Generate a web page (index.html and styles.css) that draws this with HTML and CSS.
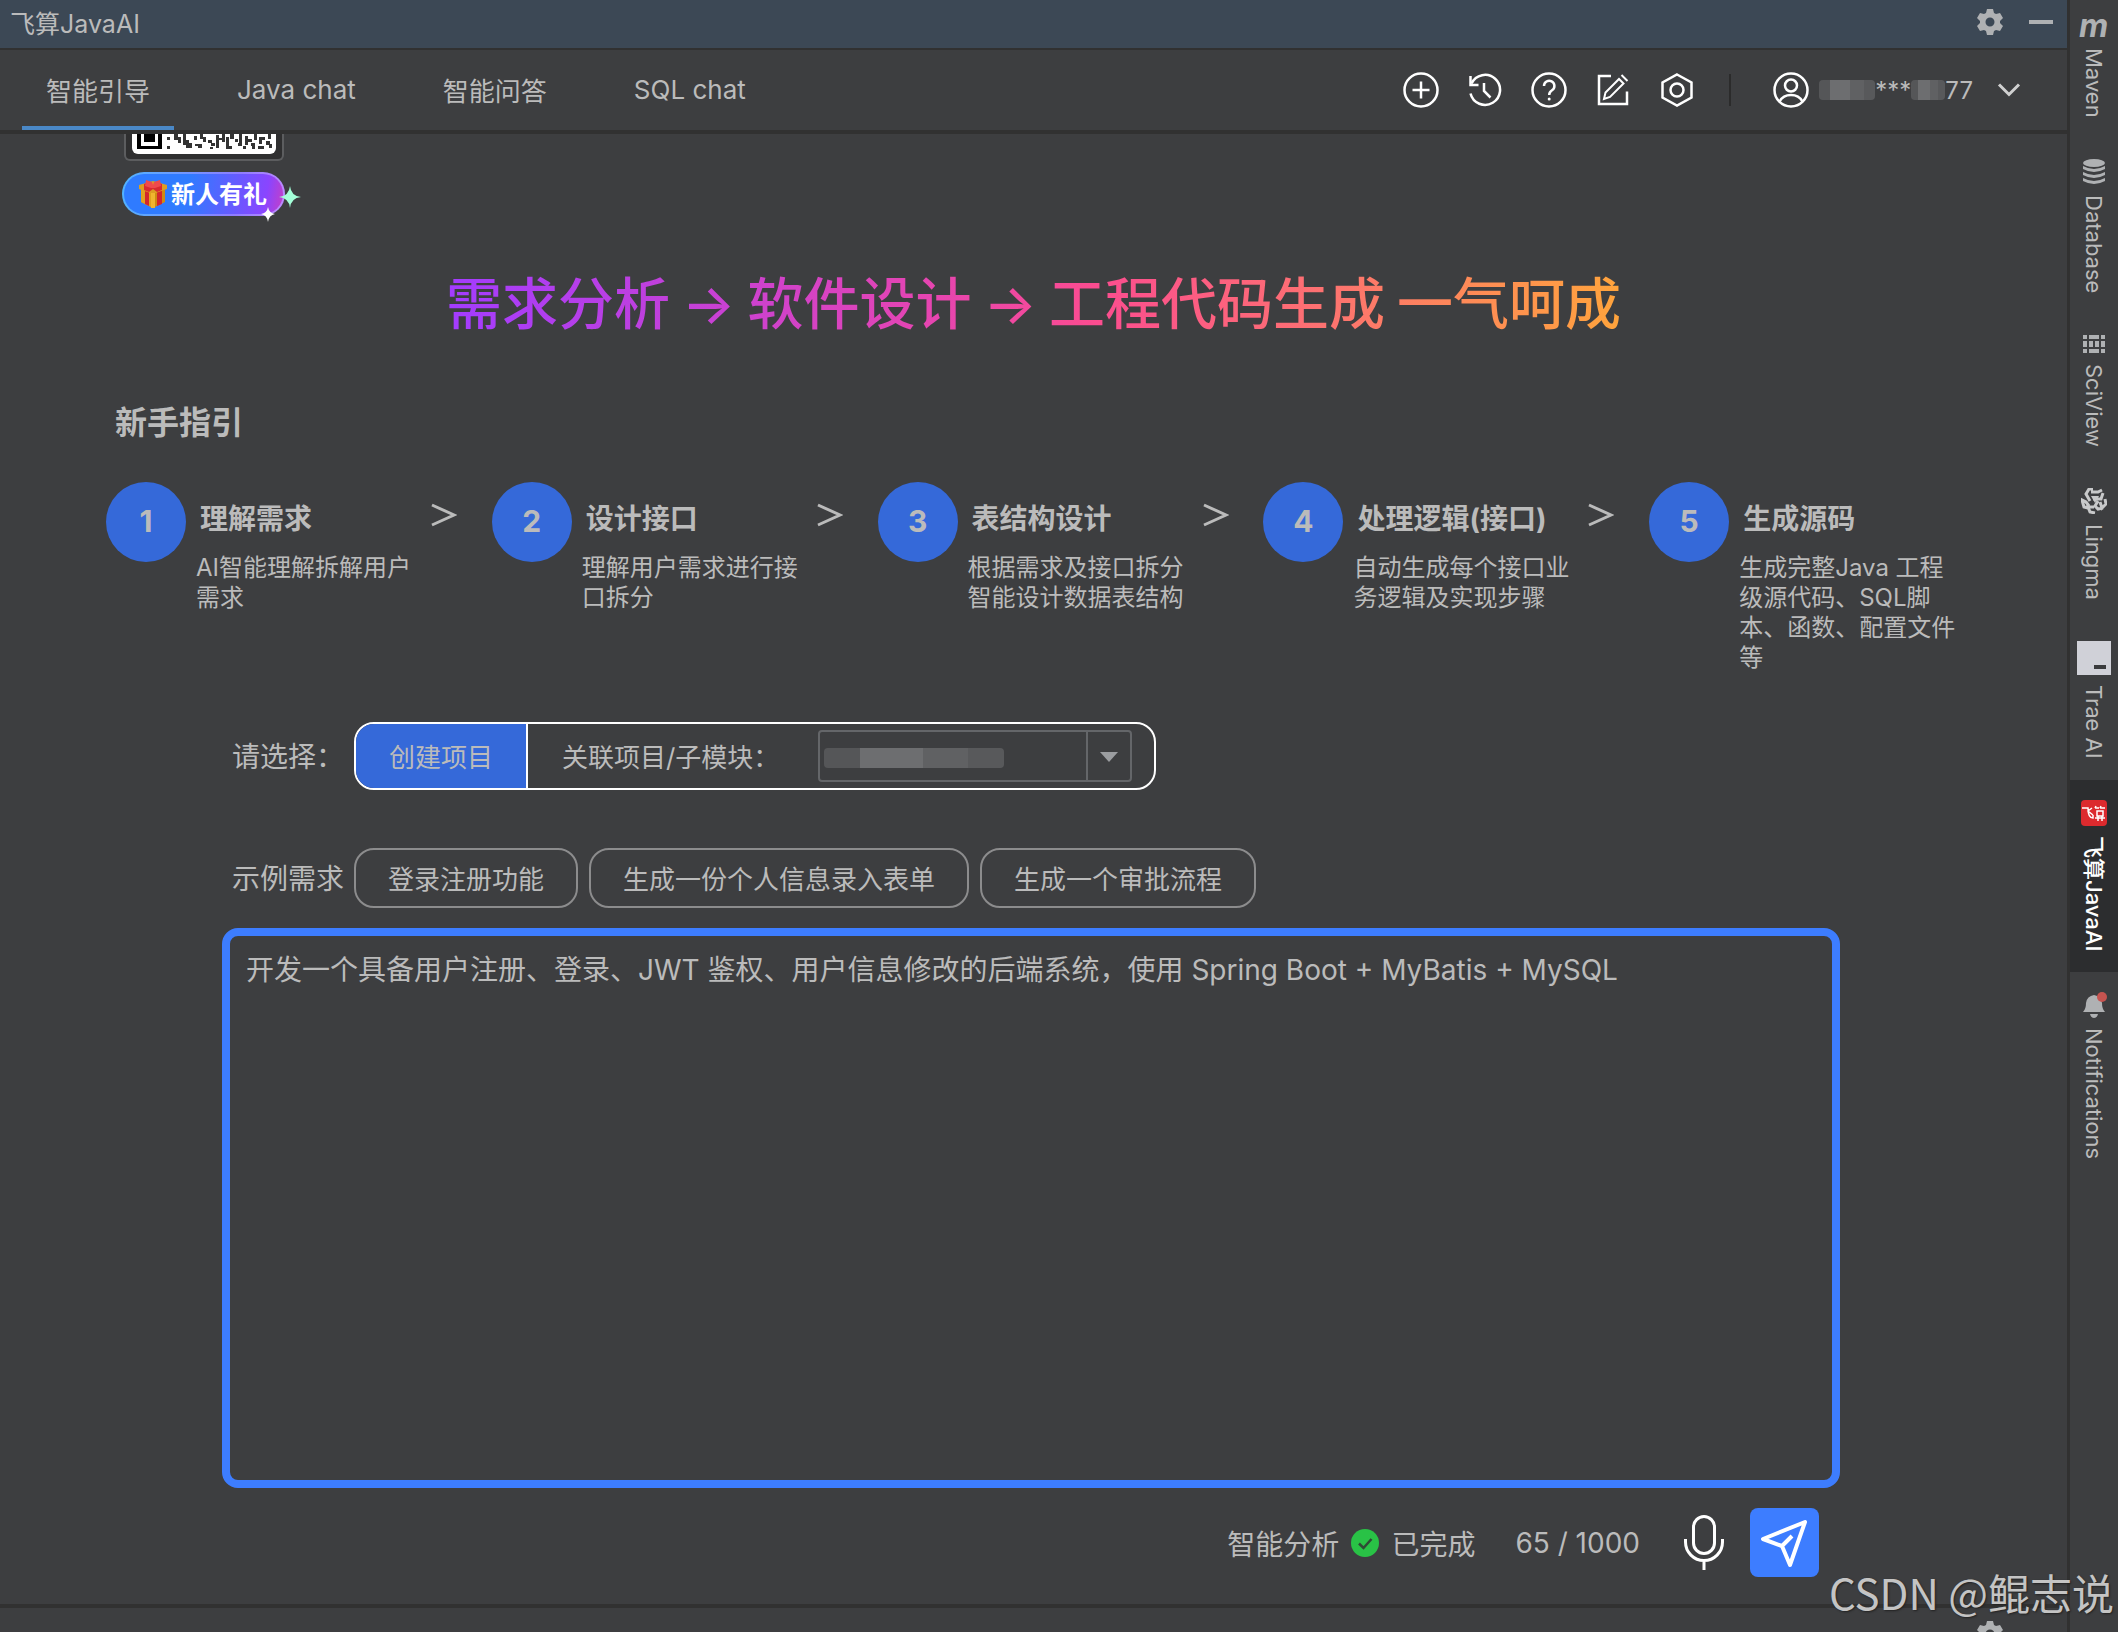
FILE: index.html
```html
<!DOCTYPE html>
<html lang="zh-CN">

<head>
    <meta charset="UTF-8">
    <meta name="viewport" content="width=device-width, initial-scale=1.0">
    <title>飞算JavaAI</title>
    <link rel="stylesheet" href="styles.css">
</head>

<body>
    <div class="window">
        <header class="title-bar">
            <span>飞算JavaAI</span>
            <div class="title-actions">
                <button class="icon-btn" aria-label="设置">
                    <svg width="26" height="26" viewBox="0 0 26 26">
                        <use href="#gear" />
                    </svg>
                </button>
                <button class="icon-btn" aria-label="最小化">
                    <svg width="24" height="26" viewBox="0 0 24 26">
                        <path d="M0 11h24v4H0z" fill="#afb1b3" />
                    </svg>
                </button>
            </div>
        </header>

        <!-- Tabs + toolbar -->
        <nav class="tab-bar">
            <div class="tabs">
                <a href="#" class="tab active">智能引导</a>
                <a href="#" class="tab">Java chat</a>
                <a href="#" class="tab">智能问答</a>
                <a href="#" class="tab">SQL chat</a>
            </div>
            <div class="tools">
                <button class="icon-btn" aria-label="新建">
                    <svg class="line-icon" viewBox="0 0 36 36">
                        <circle cx="18" cy="18" r="16.5" />
                        <path d="M18 9.500v17M9.500 18h17" />
                    </svg>
                </button>
                <button class="icon-btn" aria-label="历史">
                    <svg class="line-icon" viewBox="0 0 36 36">
                        <path d="M4.500 11.500A15 15 0 1 1 3.500 21.500" />
                        <path d="M3.500 4v9h8M17 11v8l6.500 6.500" />
                    </svg>
                </button>
                <button class="icon-btn" aria-label="帮助">
                    <svg class="line-icon" viewBox="0 0 36 36">
                        <circle cx="18" cy="18" r="16.500" />
                        <path d="M13 14a5.200 5.200 0 1 1 8 4.300c-2 1.300-2.800 2-2.800 4.700" />
                        <circle cx="18.200" cy="27" r="1.500" fill="#fff" stroke="none" />
                    </svg>
                </button>
                <button class="icon-btn" aria-label="编辑">
                    <svg class="line-icon" viewBox="0 0 36 36">
                        <path d="M16 4H4v28h28V19.500" />
                        <path d="M9 27l1.500-6.500L24 7l4.500 4.500L15 25zM26.500 3l6 6" stroke-width="2" />
                    </svg>
                </button>
                <button class="icon-btn" aria-label="配置">
                    <svg class="line-icon" viewBox="0 0 36 36">
                        <path d="M18 2.500l14.500 8v15L18 33.500l-14.500-8v-15z" />
                        <circle cx="18" cy="18" r="6.500" />
                    </svg>
                </button>
            </div>
            <span class="divider"></span>
            <button class="user">
                <svg class="line-icon" viewBox="0 0 36 36">
                    <circle cx="18" cy="18" r="16.500" />
                    <circle cx="18" cy="13.500" r="6" />
                    <path d="M6.500 29.500c3-5.500 7-6.500 11.500-6.500s8.500 1 11.500 6.500" />
                </svg>
                <span class="user-name"><i class="mask"></i>***<i class="mask short"></i>77</span>
                <svg width="24" height="16" viewBox="0 0 24 16">
                    <path d="M2 2.500l10 10 10-10" fill="none" stroke="#d0d0d0" stroke-width="3" />
                </svg>
            </button>
        </nav>

        <main class="content">
            <div class="promo">
                <div class="qr-card">
                    <svg width="144" height="20" viewBox="0 0 144 20">
                        <path d="M0 0h144v14a6 6 0 0 1-6 6H6a6 6 0 0 1-6-6z" fill="#fff" />
                        <path d="M5 0h4v12h17V0h4v15H5zM12 0h11v8H12z" />
                        <path d="M35 3h3v3h-3zM35 12h3v3h-3zM42 0h4v3h3v6h-3V6h-4zM51 0h3v6h3v3h3v5h-6v-3h-3zM62 2h3v4h-3zM63 10h7v4h-4v-2h-3zM68 0h3v3h3v5h-3V5h-3zM76 6h4v3h3v3h-4V9h-3zM78 13h3v2h-3zM84 1h3v3h3V0h3v8h-3V6h-3v8h-3zM94 3h3v9h3v3h-6zM98 0h4v5h-4zM103 5h3v3h-3zM107 0h3v12h-4v-3h1zM111 12h3v3h-3zM113 2h3v3h4v3h-4v3h-3zM119 9h4v6h-3v-3h-1zM122 0h3v6h-3zM127 3h6v3h-3v4h-3zM126 12h6v3h-6zM136 0h3v5h-3zM134 7h4v3h2v4h-3v-3h-3z" fill="#333" />
                    </svg>
                </div>
                <button class="gift-badge">
                    <svg width="30" height="30" viewBox="0 0 30 30">
                        <path d="M3 8l12 4 12-4v15l-12 6-12-6z" fill="#cf8a12" />
                        <path d="M3 8l12 4v17L3 23z" fill="#e0a01e" />
                        <path d="M7 9l4 2v16l-4-2zM19 11l5-2v16l-5 2z" fill="#d3262b" />
                        <path d="M1 6l14-4 14 4v4l-14 5L1 10z" fill="#dd9d22" />
                        <path d="M6 5l5-2 4 4 4-4 5 2v6l-5 2-4-3-4 3-5-2z" fill="#d92a30" />
                        <path d="M8 1l6 2 1 3 1-3 6-2 1 6-6 2h-4L7 7z" fill="#f04a4c" />
                        <path d="M13 14h4v15h-4z" fill="#f0b52f" />
                    </svg>
                    <span>新人有礼</span>
                    <svg class="sparkles" width="40" height="38" viewBox="0 0 40 38">
                        <path d="M29 0q1 10 11 11-10 1-11 11-1-10-11-11 10-1 11-11z" fill="#a4ffd9" />
                        <path d="M7 21q1 6 7 7-6 1-7 8-1-7-7-8 6-1 7-7z" fill="#fff" />
                    </svg>
                </button>
            </div>

            <h1 class="slogan">
                <span>需求分析</span>
                <span>→</span>
                <span>软件设计</span>
                <span>→</span>
                <span>工程代码生成</span>
                <span>一气呵成</span>
            </h1>

            <h2 class="guide-title">新手指引</h2>
            <ol class="steps">
                <li class="step">
                    <span class="step-num">1</span>
                    <div class="step-body">
                        <h3>理解需求</h3>
                        <p>AI智能理解拆解用户需求</p>
                    </div>
                    <svg class="step-arrow" viewBox="0 0 26 24">
                        <path d="M1 2l22 10L1 22" />
                    </svg>
                </li>
                <li class="step">
                    <span class="step-num">2</span>
                    <div class="step-body">
                        <h3>设计接口</h3>
                        <p>理解用户需求进行接口拆分</p>
                    </div>
                    <svg class="step-arrow" viewBox="0 0 26 24">
                        <path d="M1 2l22 10L1 22" />
                    </svg>
                </li>
                <li class="step">
                    <span class="step-num">3</span>
                    <div class="step-body">
                        <h3>表结构设计</h3>
                        <p>根据需求及接口拆分智能设计数据表结构</p>
                    </div>
                    <svg class="step-arrow" viewBox="0 0 26 24">
                        <path d="M1 2l22 10L1 22" />
                    </svg>
                </li>
                <li class="step">
                    <span class="step-num">4</span>
                    <div class="step-body">
                        <h3>处理逻辑(接口)</h3>
                        <p>自动生成每个接口业务逻辑及实现步骤</p>
                    </div>
                    <svg class="step-arrow" viewBox="0 0 26 24">
                        <path d="M1 2l22 10L1 22" />
                    </svg>
                </li>
                <li class="step">
                    <span class="step-num">5</span>
                    <div class="step-body">
                        <h3>生成源码</h3>
                        <p>生成完整Java 工程级源代码、SQL脚本、函数、配置文件等</p>
                    </div>
                </li>
            </ol>

            <form class="editor">
                <div class="row">
                    <span class="row-label">请选择：</span>
                    <div class="project-box">
                        <button type="button" class="create-btn">创建项目</button>
                        <label for="module">关联项目/子模块：</label>
                        <div class="select-wrap">
                            <select id="module">
                                <option></option>
                            </select>
                            <i class="mask value"></i>
                            <span class="select-arrow"></span>
                        </div>
                    </div>
                </div>

                <div class="row examples">
                    <span class="row-label">示例需求</span>
                    <button type="button" class="example-btn">登录注册功能</button>
                    <button type="button" class="example-btn">生成一份个人信息录入表单</button>
                    <button type="button" class="example-btn">生成一个审批流程</button>
                </div>

                <textarea class="prompt" aria-label="需求描述">开发一个具备用户注册、登录、JWT 鉴权、用户信息修改的后端系统，使用 Spring Boot + MyBatis + MySQL</textarea>

                <div class="submit-bar">
                    <span>智能分析</span>
                    <svg class="done-icon" width="28" height="28" viewBox="0 0 28 28">
                        <circle cx="14" cy="14" r="14" fill="#29c246" />
                        <path d="M8 14.500l4.500 4.500 8-9" fill="none" stroke="#2f4a35" stroke-width="2.500" />
                    </svg>
                    <span>已完成</span>
                    <span class="counter">65 / 1000</span>
                    <button type="button" class="icon-btn" aria-label="语音输入">
                        <svg width="40" height="56" viewBox="0 0 40 56" fill="none" stroke="#fff" stroke-width="3">
                            <rect x="9.500" y="1.500" width="21" height="37" rx="10.500" />
                            <path d="M1.500 24v3a18.500 18.500 0 0 0 37 0v-3M20 45.500V55" />
                        </svg>
                    </button>
                    <button type="button" class="send-btn" aria-label="发送">
                        <svg width="69" height="69" viewBox="0 0 69 69" fill="none" stroke="#fff" stroke-width="4" stroke-linejoin="round">
                            <path d="M55 14L13 31l19 7 8 19zM32 38l10-10" />
                        </svg>
                    </button>
                </div>
            </form>
        </main>

        <footer class="bottom-panel">
            <svg width="26" height="26" viewBox="0 0 26 26">
                <use href="#gear" />
            </svg>
        </footer>
    </div>

    <!-- Right tool window bar -->
    <aside class="tool-strip">
        <button class="tool">
            <svg class="maven-icon" width="30" height="18" viewBox="0 0 30 18">
                <text x="0" y="17">m</text>
            </svg>
            <span>Maven</span>
        </button>
        <button class="tool">
            <svg width="24" height="26" viewBox="0 0 24 26" fill="#afb1b3">
                <ellipse cx="12" cy="4" rx="11" ry="4" />
                <path d="M1 7q11 6 22 0v3q-11 6-22 0zM1 13q11 6 22 0v3q-11 6-22 0zM1 19q11 6 22 0v3q-11 6-22 0z" />
            </svg>
            <span>Database</span>
        </button>
        <button class="tool">
            <svg width="22" height="20" viewBox="0 0 22 20" fill="#afb1b3">
                <path d="M0 1h4v4H0zM6 1h10v4H6zM18 1h4v4h-4zM0 7h4v6H0zM6 7h4v6H6zM12 7h4v6h-4zM18 7h4v6h-4zM0 15h4v4H0zM6 15h10v4H6zM18 15h4v4h-4z" />
            </svg>
            <span>SciView</span>
        </button>
        <button class="tool">
            <svg width="26" height="26" viewBox="0 0 26 26" fill="none" stroke="#c8c9ca" stroke-width="3">
                <path d="M12 1H8L5 6l4 7M10 4h7l4-2M22 5l-2 6h-8M24 11l1 5-4 4-2-6M22 20l-5 1-3-3 3-5M14 25l-5-1-2-5h6M7 20l-4-1-2-7 4 2 3 4" />
                <path d="M10 8h8l-4 7z" fill="#c8c9ca" stroke="none" />
            </svg>
            <span>Lingma</span>
        </button>
        <button class="tool">
            <svg width="34" height="34" viewBox="0 0 34 34">
                <path d="M0 0h34v34H0z" fill="#d0d1d8" />
                <path d="M17 24h12v4H17z" fill="#3a3b3d" />
            </svg>
            <span>Trae AI</span>
        </button>
        <button class="tool active">
            <svg width="26" height="26" viewBox="0 0 26 26" fill="none" stroke="#fff" stroke-width="2">
                <rect width="26" height="26" rx="4" fill="#dc2a2e" stroke="none" />
                <path d="M1 8h6q0 10 5 10v-3M11 8l-4 3 5 4M14 8l1-2M14 8h4M19 8l1-2M19 8h5M16 11h6v5h-6zM14 18h10M17 16v5M21 16v5" stroke-width="1.500" />
            </svg>
            <span>飞算JavaAI</span>
        </button>
        <button class="tool">
            <svg width="26" height="26" viewBox="0 0 26 26" fill="#afb1b3">
                <path d="M2 20q3-3 3-9 1-7 8-8 7 1 8 8 0 6 3 9zM9 22h8q-1 4-4 4t-4-4z" />
                <circle cx="21" cy="5" r="5" fill="#c75450" />
            </svg>
            <span>Notifications</span>
        </button>
    </aside>

    <div class="watermark">CSDN @鲲志说</div>

    <svg class="sprite" aria-hidden="true">
        <symbol id="gear" viewBox="0 0 26 26">
            <path d="M10 0h6l1 4 2 1 4-1 3 5-3 3v2l3 3-3 5-4-1-2 1-1 4h-6l-1-4-2-1-4 1-3-5 3-3v-2L0 9l3-5 4 1 2-1zM13 8.500a4.500 4.500 0 1 0 0 9 4.500 4.500 0 1 0 0-9z" fill="#afb1b3" fill-rule="evenodd" />
        </symbol>
    </svg>
</body>

</html>
```
FILE: styles.css
```css
:root {
    --bg: #3d3e40;
    --line: #313131;
    --text: #bbbbbb;
    --blue: #3569d9;
    --blue-bright: #3d7dff;
}

* {
    box-sizing: border-box;
}

body {
    margin: 0;
    display: flex;
    height: 100vh;
    overflow: hidden;
    background: var(--bg);
    color: var(--text);
    font-family: Inter, "Noto Sans CJK SC", sans-serif;
    font-size: 26px;
}

h1,
h2,
h3,
p,
ol {
    margin: 0;
    padding: 0;
}

button,
select,
textarea {
    font: inherit;
    color: inherit;
    background: none;
    border: none;
    padding: 0;
    margin: 0;
}

svg {
    display: block;
    flex-shrink: 0;
}

.sprite {
    position: absolute;
    width: 0;
    height: 0;
}

.window {
    flex: 1;
    min-width: 0;
    display: flex;
    flex-direction: column;
}

/* Title bar */
.title-bar {
    display: flex;
    align-items: center;
    justify-content: space-between;
    height: 50px;
    padding: 0 14px 4px 10px;
    background: #3c4855;
    border-bottom: 2px solid var(--line);
    font-size: 25px;
}

.title-actions {
    display: flex;
    gap: 26px;
}

/* Tabs */
.tab-bar {
    display: flex;
    align-items: center;
    height: 84px;
    padding: 0 46px 0 22px;
    border-bottom: 4px solid var(--line);
}

.tabs {
    display: flex;
    gap: 39px;
    height: 100%;
    margin-right: auto;
}

.tab {
    display: flex;
    align-items: center;
    padding: 2px 24px 0;
    border-bottom: 4px solid transparent;
    color: inherit;
    text-decoration: none;
}

.tab.active {
    border-bottom-color: #4a88c7;
}

.tools {
    display: flex;
    gap: 28px;
}

.line-icon {
    width: 36px;
    height: 36px;
    fill: none;
    stroke: #fff;
    stroke-width: 2.5;
}

.divider {
    width: 2px;
    height: 32px;
    margin: 0 42px 0 34px;
    background: #2b2b2b;
}

.user {
    display: flex;
    align-items: center;
    gap: 10px;
    font-size: 24px;
}

.user-name {
    display: flex;
    align-items: center;
    margin-right: 14px;
}

/* Blurred-out private text */
.mask {
    width: 56px;
    height: 20px;
    border-radius: 4px;
    background: linear-gradient(90deg, #555658 0 20%, #6d6e70 20% 55%, #606163 55% 80%, #58595b 80%);
}

.mask.short {
    width: 34px;
}

/* Content */
.content {
    flex: 1;
    min-height: 0;
    display: flex;
    flex-direction: column;
    overflow: hidden;
}

.promo {
    display: flex;
    flex-direction: column;
    align-items: flex-start;
    gap: 11px;
    padding-left: 122px;
}

.qr-card {
    margin-left: 2px;
    padding: 0 6px 5px;
    background: #2f2f30;
    border: 2px solid #5c5d5f;
    border-top: none;
    border-radius: 0 0 6px 6px;
}

.gift-badge {
    position: relative;
    display: flex;
    align-items: center;
    gap: 3px;
    height: 44px;
    padding: 0 16px 0 14px;
    border: 2px solid transparent;
    border-radius: 22px;
    background: linear-gradient(100deg, #2f7bff 40%, #8a45ff 88%, #c63fc4) padding-box,
        linear-gradient(100deg, #4fb4ff, #8f7bff 70%, #c08bff) border-box;
    color: #fff;
    font-size: 24px;
    font-weight: 700;
}

.gift-badge span {
    padding-bottom: 4px;
}

.sparkles {
    position: absolute;
    right: -18px;
    top: 12px;
}

.slogan {
    display: flex;
    gap: 12px;
    width: fit-content;
    margin: 48px auto 0;
    background: linear-gradient(90deg, #a33cff, #e745af 42%, #fb4c90 55%, #fd7270 75%, #ffa43c);
    background-clip: text;
    -webkit-background-clip: text;
    color: transparent;
    font-size: 56px;
    font-weight: 500;
    line-height: 80px;
}

.guide-title {
    margin: 57px 0 37px 115px;
    font-size: 32px;
    line-height: 44px;
}

/* Steps */
.steps {
    display: grid;
    grid-template-columns: repeat(5, 1fr);
    padding: 0 32px 0 106px;
    list-style: none;
}

.step {
    display: flex;
    align-items: flex-start;
}

.step-num {
    display: flex;
    align-items: center;
    justify-content: center;
    flex-shrink: 0;
    width: 80px;
    height: 80px;
    padding-bottom: 2px;
    border-radius: 50%;
    background: var(--blue);
    font-size: 30px;
    font-weight: 700;
}

.step-body {
    width: 216px;
    margin: 17px 19px 0 10px;
}

.step-body h3 {
    padding-left: 4px;
    font-size: 28px;
    line-height: 40px;
}

.step-body p {
    margin-top: 14px;
    font-size: 24px;
    line-height: 30px;
}

.step-arrow {
    width: 26px;
    height: 24px;
    margin-top: 21px;
    fill: none;
    stroke: var(--text);
    stroke-width: 3;
}

/* Request form */
.editor {
    flex: 1;
    min-height: 0;
    display: flex;
    flex-direction: column;
    margin-top: 49px;
    padding: 0 227px 27px 222px;
}

.row {
    display: flex;
    align-items: center;
    padding-left: 10px;
}

.row-label {
    width: 122px;
    padding-bottom: 2px;
    font-size: 28px;
    white-space: nowrap;
}

.project-box {
    display: flex;
    align-items: center;
    height: 68px;
    padding-right: 22px;
    border: 2px solid #fff;
    border-radius: 20px;
    overflow: hidden;
}

.project-box label {
    padding-bottom: 2px;
}

.create-btn {
    align-self: stretch;
    width: 172px;
    margin-right: 34px;
    padding-bottom: 2px;
    background: var(--blue);
    border-right: 2px solid #fff;
}

.select-wrap {
    position: relative;
    margin-left: 39px;
}

.select-wrap select {
    display: block;
    width: 314px;
    height: 52px;
    appearance: none;
    border: 2px solid #646669;
    border-radius: 4px;
}

.mask.value {
    position: absolute;
    left: 6px;
    top: 18px;
    width: 180px;
}

.select-arrow {
    position: absolute;
    right: 2px;
    top: 2px;
    width: 44px;
    height: 48px;
    border-left: 2px solid #646669;
    pointer-events: none;
}

.select-arrow::after {
    content: "";
    position: absolute;
    left: 12px;
    top: 20px;
    border: 9px solid transparent;
    border-top: 10px solid #9b9da0;
    border-bottom: none;
}

.examples {
    gap: 11px;
    margin: 58px 0 20px;
}

.examples .row-label {
    width: 111px;
}

.example-btn {
    height: 60px;
    padding: 0 32px 2px;
    border: 2px solid #8c8c8d;
    border-radius: 20px;
}

.prompt {
    flex: 1;
    min-height: 0;
    padding: 12px 16px;
    border: 8px solid var(--blue-bright);
    border-radius: 16px;
    font-size: 28px;
    line-height: 44px;
    resize: none;
    outline: none;
}

.submit-bar {
    display: flex;
    align-items: center;
    justify-content: flex-end;
    margin-top: 20px;
    padding-right: 21px;
    font-size: 28px;
}

.done-icon {
    margin: 0 12px;
}

.counter {
    margin: 0 44px 0 40px;
}

.send-btn {
    margin-left: 26px;
    border-radius: 8px;
    background: var(--blue-bright);
}

.bottom-panel {
    display: flex;
    justify-content: flex-end;
    height: 28px;
    padding: 13px 64px 0 0;
    border-top: 4px solid var(--line);
    overflow: hidden;
}

/* Right tool strip */
.tool-strip {
    width: 51px;
    border-left: 3px solid var(--line);
    display: flex;
    flex-direction: column;
}

.tool {
    display: flex;
    flex-direction: column;
    align-items: center;
    gap: 10px;
    padding: 20px 0 21px;
    font-size: 22px;
    line-height: 28px;
}

.tool span {
    writing-mode: vertical-rl;
    text-orientation: sideways;
}

.tool.active {
    background: #2c2d2f;
    color: #fff;
    font-weight: 500;
}

.maven-icon {
    overflow: visible;
    fill: #afb1b3;
    font-size: 32px;
    font-style: italic;
    font-weight: 700;
}

.watermark {
    position: absolute;
    right: 4px;
    bottom: 10px;
    font-family: "Noto Sans CJK SC", sans-serif;
    font-size: 42px;
    line-height: 60px;
    color: #c4c4c4;
    text-shadow: 1px 1px 2px #222;
}
```
